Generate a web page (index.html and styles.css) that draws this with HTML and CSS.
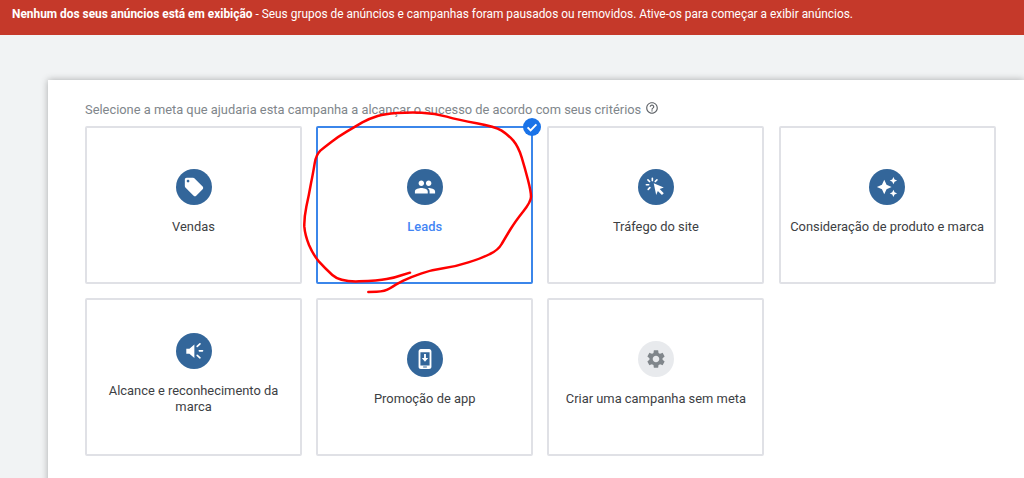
FILE: index.html
```html
<!DOCTYPE html>
<html lang="pt">

<head>
    <meta charset="UTF-8">
    <meta name="viewport" content="width=device-width, initial-scale=1.0">
    <title>Meta da campanha</title>
    <link rel="stylesheet" href="styles.css">
</head>

<body>
    <div class="banner">
        <b>Nenhum dos seus anúncios está em exibição</b> - Seus grupos de anúncios e campanhas foram pausados ou removidos. Ative-os para começar a exibir anúncios.
    </div>

    <div class="panel">
        <div class="prompt">
            Selecione a meta que ajudaria esta campanha a alcançar o sucesso de acordo com seus critérios
            <svg class="help" viewBox="0 0 24 24"><path d="M11 18h2v-2h-2v2zm1-16C6.48 2 2 6.48 2 12s4.48 10 10 10 10-4.48 10-10S17.52 2 12 2zm0 18c-4.41 0-8-3.59-8-8s3.59-8 8-8 8 3.59 8 8-3.59 8-8 8zm0-14c-2.21 0-4 1.79-4 4h2c0-1.1.9-2 2-2s2 .9 2 2c0 2-3 1.75-3 5h2c0-2.25 3-2.5 3-5 0-2.21-1.79-4-4-4z"/></svg>
        </div>

        <div class="goals">
            <div class="card">
                <div class="icon">
                    <svg viewBox="0 0 24 24"><path d="M21.41 11.58l-9-9C12.05 2.22 11.55 2 11 2H4c-1.1 0-2 .9-2 2v7c0 .55.22 1.05.59 1.42l9 9c.36.36.86.58 1.41.58.55 0 1.05-.22 1.41-.59l7-7c.37-.36.59-.86.59-1.41 0-.55-.23-1.06-.59-1.42zM5.5 7C4.67 7 4 6.33 4 5.5S4.67 4 5.5 4 7 4.67 7 5.5 6.33 7 5.5 7z"/></svg>
                </div>
                <span>Vendas</span>
            </div>

            <div class="card selected">
                <div class="icon">
                    <svg viewBox="0 0 24 24"><path d="M16 11c1.66 0 2.99-1.34 2.99-3S17.66 5 16 5c-1.66 0-3 1.34-3 3s1.34 3 3 3zm-8 0c1.66 0 2.99-1.34 2.99-3S9.66 5 8 5C6.34 5 5 6.34 5 8s1.34 3 3 3zm0 2c-2.33 0-7 1.17-7 3.5V19h14v-2.5c0-2.33-4.67-3.5-7-3.5zm8 0c-.29 0-.62.02-.97.05 1.16.84 1.97 1.97 1.97 3.45V19h6v-2.5c0-2.33-4.67-3.5-7-3.5z"/></svg>
                </div>
                <span>Leads</span>
                <svg class="check" viewBox="0 0 18 18"><circle cx="9" cy="9" r="9"/><path d="M4.6 9.4l3 3 5.8-6"/></svg>
            </div>

            <div class="card">
                <div class="icon">
                    <svg viewBox="0 0 24 24"><path d="M9.500 8l11 4.500-4.500 1.800 4.500 4.500-2 2-4.500-4.500-1.800 4.500z"/><path class="rays" d="M8 2.500V5M3.200 4.200L5 6M13 4.200L11.200 6M1.500 9.500H4M3.500 14.500l1.800-1.800"/></svg>
                </div>
                <span>Tráfego do site</span>
            </div>

            <div class="card">
                <div class="icon">
                    <svg viewBox="0 0 24 24"><path d="M19 9l1.25-2.75L23 5l-2.75-1.25L19 1l-1.25 2.75L15 5l2.75 1.25L19 9zm-7.5.5L9 4 6.5 9.5 1 12l5.5 2.5L9 20l2.5-5.5L17 12l-5.5-2.5zM19 15l-1.25 2.75L15 19l2.75 1.25L19 23l1.25-2.75L23 19l-2.75-1.25L19 15z"/></svg>
                </div>
                <span>Consideração de produto e marca</span>
            </div>

            <div class="card">
                <div class="icon">
                    <svg viewBox="0 0 24 24"><path d="M3.600 9.500H7L12.400 5v14.500L7 15H3.600z"/><path class="rays" d="M17.800 11.800h3.500M15.500 7L18.500 4.200M15.500 16.800l3 2.600"/></svg>
                </div>
                <span>Alcance e reconhecimento da marca</span>
            </div>

            <div class="card">
                <div class="icon">
                    <svg viewBox="0 0 24 24"><path fill-rule="evenodd" d="M7.500 1h9C17.900 1 19 2.100 19 3.500v17c0 1.400-1.100 2.500-2.500 2.500h-9C6.100 23 5 21.900 5 20.500v-17C5 2.100 6.100 1 7.500 1zM7 4.500V19h10V4.500zM10 20.300v1h4v-1z"/><path d="M11 6.500h2v4.500h2.500L12 15l-3.500-4H11z"/></svg>
                </div>
                <span>Promoção de app</span>
            </div>

            <div class="card">
                <div class="icon muted">
                    <svg viewBox="0 0 24 24"><path d="M19.14 12.94c.04-.3.06-.61.06-.94 0-.32-.02-.64-.07-.94l2.03-1.58c.18-.14.23-.41.12-.61l-1.92-3.32c-.12-.22-.37-.29-.59-.22l-2.39.96c-.5-.38-1.03-.7-1.62-.94l-.36-2.54c-.04-.24-.24-.41-.48-.41h-3.84c-.24 0-.43.17-.47.41l-.36 2.54c-.59.24-1.13.57-1.62.94l-2.39-.96c-.22-.08-.47 0-.59.22L2.74 8.87c-.12.21-.08.47.12.61l2.03 1.58c-.05.3-.09.63-.09.94s.02.64.07.94l-2.03 1.58c-.18.14-.23.41-.12.61l1.92 3.32c.12.22.37.29.59.22l2.39-.96c.5.38 1.03.7 1.62.94l.36 2.54c.05.24.24.41.48.41h3.84c.24 0 .44-.17.47-.41l.36-2.54c.59-.24 1.13-.56 1.62-.94l2.39.96c.22.08.47 0 .59-.22l1.92-3.32c.12-.22.07-.47-.12-.61l-2.01-1.58zM12 15.6c-1.98 0-3.6-1.62-3.6-3.6s1.62-3.6 3.6-3.6 3.6 1.62 3.6 3.6-1.62 3.6-3.6 3.6z"/></svg>
                </div>
                <span>Criar uma campanha sem meta</span>
            </div>
        </div>
    </div>

    <!-- hand drawn circle on top of the screenshot -->
    <svg class="scribble" viewBox="0 0 750 600">
        <path d="M345 503L322 510Q300 518 275 522Q250 527 192 529Q135 531 112 510Q90 490 72 470Q55 450 42 420Q30 390 28 365Q27 340 34 305Q42 270 48 235Q55 200 59 175Q63 150 76 137Q90 125 110 110Q130 95 155 80Q180 65 202 52Q225 40 248 33Q270 27 305 24Q340 22 380 23Q420 25 455 35Q490 45 545 55Q600 65 620 77Q640 90 655 107Q670 125 680 157Q690 190 699 225Q708 260 708 275Q708 290 684 320Q660 350 645 375Q630 400 620 417Q610 435 585 447Q560 460 520 472Q480 485 445 490Q410 495 380 505Q350 515 325 527Q300 540 285 550Q270 560 245 560L220 561"/>
    </svg>
</body>

</html>
```

FILE: styles.css
```css
html,
body {
    height: 100%;
    overflow: hidden;
}

body {
    font-family: Roboto, Arial, sans-serif;
    background-color: #f1f3f4;
    margin: 0;
    padding: 0;
    position: relative;
}

.banner {
    background-color: #c5392a;
    color: #fff;
    font-size: 11.9px;
    line-height: 16px;
    height: 35px;
    padding: 6px 12px 0;
    box-sizing: border-box;
    white-space: nowrap;
}

.panel {
    background-color: #fff;
    margin: 45px 0 0 48px;
    padding: 21px 0 40px 37px;
    box-shadow: 0 0 7px rgba(0, 0, 0, 0.3);
}

.prompt {
    color: #80868b;
    font-size: 12.87px;
    line-height: 18px;
    height: 25px;
    white-space: nowrap;
}

.help {
    width: 14px;
    height: 14px;
    fill: #5f6368;
    vertical-align: -1px;
    margin-left: 1px;
}

.goals {
    display: grid;
    grid-template-columns: repeat(4, 217px);
    grid-auto-rows: 158px;
    gap: 14px 14.2px;
}

.card {
    position: relative;
    display: flex;
    flex-direction: column;
    align-items: center;
    justify-content: center;
    gap: 14px;
    padding: 0 8px 6px;
    box-sizing: border-box;
    border: 2px solid #e0e1e6;
    border-radius: 2px;
    color: #3c4043;
    font-size: 12.9px;
    line-height: 16px;
    text-align: center;
}

.card.selected {
    border-color: #3b86ea;
    color: #4285f4;
    font-weight: 500;
}

.icon {
    width: 36px;
    height: 36px;
    flex: none;
    display: flex;
    align-items: center;
    justify-content: center;
    border-radius: 50%;
    background-color: #33669a;
}

.icon svg {
    width: 22px;
    height: 22px;
    fill: #fff;
}

.icon .rays {
    fill: none;
    stroke: #fff;
    stroke-width: 1.800;
    stroke-linecap: round;
}

.icon.muted {
    background-color: #e8eaed;
}

.icon.muted svg {
    fill: #80868b;
}

.check {
    position: absolute;
    top: -10px;
    right: -10px;
    width: 18px;
    height: 18px;
    fill: #1a73e8;
}

.check path {
    fill: none;
    stroke: #fff;
    stroke-width: 2;
}

.scribble {
    position: absolute;
    left: 295px;
    top: 105px;
    width: 250px;
    height: 200px;
}

.scribble path {
    fill: none;
    stroke: #f00;
    stroke-width: 7.500;
    stroke-linecap: round;
    stroke-linejoin: round;
}
```
